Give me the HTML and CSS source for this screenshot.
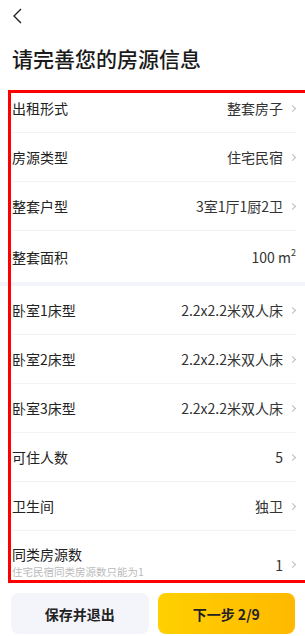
FILE: index.html
```html
<!DOCTYPE html>
<html lang="zh-CN">

<head>
    <meta charset="utf-8">
    <meta name="viewport" content="width=device-width, initial-scale=1.0">
    <title>房源信息</title>
    <link rel="stylesheet" href="styles.css">
</head>

<body>
    <header class="top">
        <svg class="back" width="11" height="16" viewBox="0 0 11 16">
            <path d="M9 1 L2 8 L9 15" fill="none" stroke="#222" stroke-width="1.4" />
        </svg>
    </header>

    <h1>请完善您的房源信息</h1>

    <main class="liste">
        <div class="row"><span class="label">出租形式</span><span class="value">整套房子</span><i class="pil"></i></div>
        <div class="row"><span class="label">房源类型</span><span class="value">住宅民宿</span><i class="pil"></i></div>
        <div class="row"><span class="label">整套户型</span><span class="value">3室1厅1厨2卫</span><i class="pil"></i></div>
        <div class="row sidst"><span class="label">整套面积</span><span class="value">100 m<sup>2</sup></span></div>

        <div class="band"></div>

        <div class="row"><span class="label">卧室1床型</span><span class="value">2.2x2.2米双人床</span><i class="pil"></i></div>
        <div class="row"><span class="label">卧室2床型</span><span class="value">2.2x2.2米双人床</span><i class="pil"></i></div>
        <div class="row"><span class="label">卧室3床型</span><span class="value">2.2x2.2米双人床</span><i class="pil"></i></div>
        <div class="row"><span class="label">可住人数</span><span class="value">5</span><i class="pil"></i></div>
        <div class="row"><span class="label">卫生间</span><span class="value">独卫</span><i class="pil"></i></div>
        <div class="row hoej">
            <div class="tekst">
                <span class="label">同类房源数</span>
                <span class="note">住宅民宿同类房源数只能为1</span>
            </div>
            <span class="value">1</span><i class="pil"></i>
        </div>
    </main>

    <footer class="knapper">
        <button class="gem">保存并退出</button>
        <button class="naeste">下一步 2/9</button>
    </footer>

    <div class="markering"></div>
</body>

</html>
```

FILE: styles.css
```css
* {
    box-sizing: border-box;
    margin: 0;
    padding: 0;
}

body {
    font-family: "Noto Sans CJK SC", "Noto Sans", sans-serif;
    background-color: white;
    color: #222;
    width: 305px;
    overflow: hidden;
}

.top {
    height: 36px;
    padding: 8px 0 0 12px;
}

.back {
    display: block;
}

h1 {
    font-size: 21px;
    font-weight: 500;
    line-height: 28px;
    margin-top: 8px;
    padding-left: 12px;
    margin-bottom: 12px;
    color: #1a1a1a;
}

.row {
    display: flex;
    align-items: center;
    height: 49px;
    margin: 0 9px 0 12px;
    border-bottom: 1px solid #f3f3f3;
    font-size: 14px;
}

.row.sidst {
    height: 51px;
    border-bottom: none;
}

.label {
    flex: 1;
    color: #222;
}

.value {
    color: #333;
}

.value sup {
    font-size: 9px;
    position: relative;
    top: -1px;
}

.pil {
    width: 5px;
    height: 5px;
    border-top: 1px solid #bbb;
    border-right: 1px solid #bbb;
    transform: rotate(45deg);
    margin-left: 7px;
    margin-right: 1px;
}

.band {
    height: 4px;
    background-color: #f4f5fa;
}

.row.hoej {
    height: 55px;
    border-bottom: none;
    align-items: flex-start;
    padding-top: 13px;
}

.tekst {
    flex: 1;
    display: flex;
    flex-direction: column;
}

.tekst .label {
    line-height: 20px;
}

.note {
    font-size: 10.5px;
    line-height: 14px;
    color: #bbb;
    margin-top: 1px;
}

.row.hoej .value {
    margin-top: 11px;
}

.row.hoej .pil {
    margin-top: 18px;
}

.knapper {
    display: flex;
    gap: 9px;
    padding: 7px 10px 0 11px;
}

.knapper button {
    flex: 1;
    height: 41px;
    border: none;
    border-radius: 8px;
    font-family: inherit;
    font-size: 14px;
    font-weight: 700;
    color: #222;
}

.gem {
    background-color: #f4f5fa;
}

.naeste {
    background: linear-gradient(90deg, #ffd000, #ffb900);
}

.markering {
    position: absolute;
    left: 8px;
    top: 90px;
    width: 310px;
    height: 493px;
    border: 3px solid #ff0000;
    pointer-events: none;
}
```
